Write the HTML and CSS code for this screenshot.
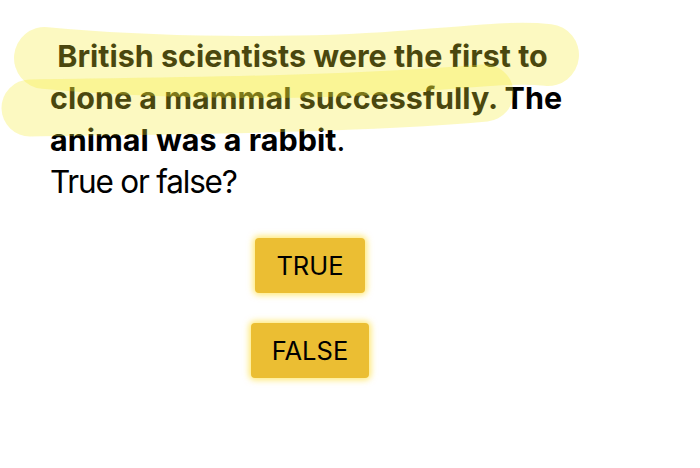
FILE: index.html
```html
<!DOCTYPE html>
<html lang="en">
<head>
<meta charset="utf-8">
<title>Quiz</title>
<link rel="stylesheet" href="styles.css">
</head>
<body>
<main class="quiz">
  <p class="question"><strong>&nbsp;British scientists were the first to clone a mammal successfully. The animal was a rabbit</strong>.</p>
  <p class="prompt">True or false?</p>
  <div class="answers">
    <button class="answer">TRUE</button>
    <button class="answer">FALSE</button>
  </div>
</main>
<svg class="marks" width="700" height="468" viewBox="0 0 700 468" aria-hidden="true">
  <path class="mark" d="M 45 58 C 150 68, 300 70, 400 62 S 520 52, 548 55" stroke-width="62"/>
  <path class="mark" d="M 30 108 C 150 106, 350 105, 485 93" stroke-width="57"/>
</svg>
</body>
</html>
```

FILE: styles.css
```css
html, body {
  margin: 0;
  padding: 0;
  background: #ffffff;
}

body {
  width: 700px;
  height: 468px;
  overflow: hidden;
  font-family: Inter, "Liberation Sans", sans-serif;
  color: #000000;
}

.quiz {
  padding: 35px 0 0 50px;
  display: flex;
  flex-direction: column;
}

.question {
  margin: 0;
  width: 530px;
  font-size: 30.5px;
  line-height: 42px;
  font-weight: 400;
}

.question strong {
  font-weight: 700;
}

.prompt {
  margin: 0;
  font-size: 31.5px;
  line-height: 42px;
  letter-spacing: -1.2px;
  font-weight: 400;
}

.answers {
  margin-top: 35px;
  width: 520px;
  display: flex;
  flex-direction: column;
  align-items: center;
  gap: 30px;
}

.answer {
  height: 55px;
  padding: 0 21px;
  border: none;
  border-radius: 4px;
  background: #ebbe33;
  box-shadow: 0 0 6px 2px rgba(255, 214, 0, 0.55);
  font-family: Inter, "Liberation Sans", sans-serif;
  font-size: 25.5px;
  font-weight: 400;
  color: #000000;
}

.marks {
  position: absolute;
  left: 0;
  top: 0;
  pointer-events: none;
}

.mark {
  fill: none;
  stroke: rgb(245, 235, 50);
  stroke-opacity: 0.3;
  stroke-linecap: round;
  stroke-linejoin: round;
}
```
